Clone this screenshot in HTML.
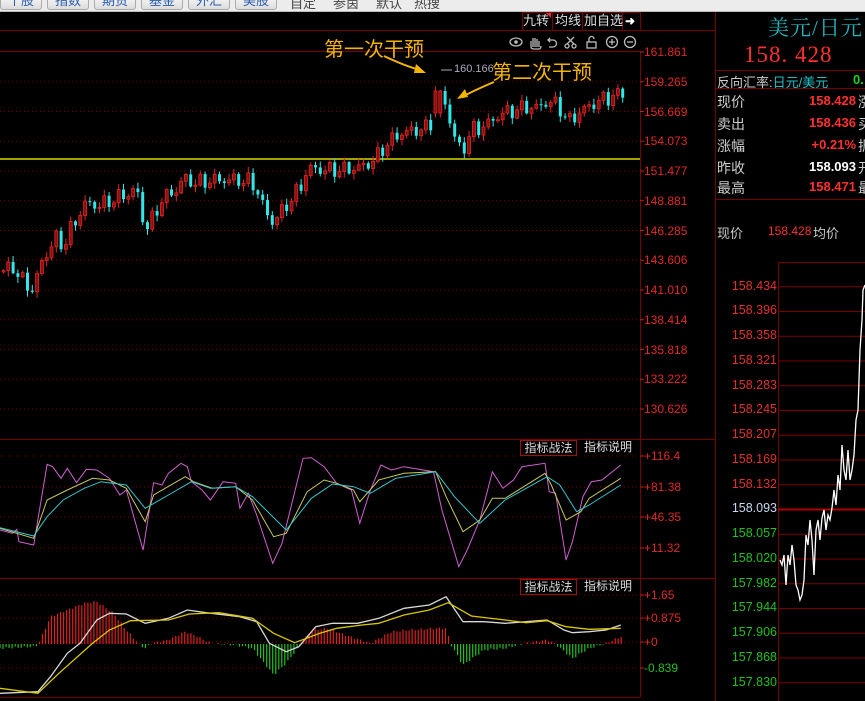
<!DOCTYPE html>
<html><head><meta charset="utf-8">
<style>
*{margin:0;padding:0;box-sizing:border-box}
body{width:865px;height:701px;overflow:hidden;background:#000;position:relative;font-family:"Liberation Sans","Noto Sans CJK SC",sans-serif}
#top{position:absolute;left:0;top:0;width:865px;height:12px;background:#ececec;overflow:hidden;border-bottom:1px solid #bbb}
.tb{position:absolute;top:-8px;height:18px;width:42px;border:1px solid #aaa;border-radius:3px;background:linear-gradient(#fff,#dcdcdc);color:#2a5db0;font-size:13px;text-align:center;line-height:16px}
.tt{position:absolute;top:-7px;font-size:13px;color:#444}
.a{position:absolute;white-space:nowrap}
svg{position:absolute;left:0;top:0}
</style></head><body>
<div id="top">
<div class="tb" style="left:0">个股</div><div class="tb" style="left:47px">指数</div><div class="tb" style="left:94px">期货</div><div class="tb" style="left:141px">基金</div><div class="tb" style="left:188px">外汇</div><div class="tb" style="left:235px">美股</div>
<div class="tt" style="left:290px">自定</div><div class="tt" style="left:333px">参茵</div><div class="tt" style="left:376px">默认</div><div class="tt" style="left:414px">热搜</div>
</div>
<svg id="s" width="865" height="701" viewBox="0 0 865 701"></svg>

<div class="a" style="left:523px;top:13px;font-size:13px;color:#ddd;line-height:16px">九转</div>
<div class="a" style="left:555px;top:13px;font-size:13px;color:#ddd;line-height:16px">均线</div>
<div class="a" style="left:584px;top:13px;font-size:13px;color:#ddd;line-height:16px">加自选</div>
<div class="a" style="left:625px;top:13px;font-size:12px;color:#fff;line-height:16px;font-weight:bold">➜</div>

<div class="a" style="left:324px;top:33px;font-size:20px;color:#f5b400">第一次干预</div>
<div class="a" style="left:492px;top:56px;font-size:20px;color:#f5b400">第二次干预</div>
<div class="a" style="left:454px;top:63px;font-size:11px;color:#aab">160.166</div>

<div id="ax" style="position:absolute;left:644px;top:0;font-size:12px;color:#e02828"></div>

<div class="a" style="left:520px;top:440px;width:57px;height:16px;border:1px solid #a01010;color:#ddd;font-size:12px;line-height:14px;text-align:center">指标战法</div>
<div class="a" style="left:580px;top:440px;width:56px;height:16px;color:#ddd;font-size:12px;line-height:14px;text-align:center">指标说明</div>
<div class="a" style="left:520px;top:579px;width:57px;height:16px;border:1px solid #a01010;color:#ddd;font-size:12px;line-height:14px;text-align:center">指标战法</div>
<div class="a" style="left:580px;top:579px;width:56px;height:16px;color:#ddd;font-size:12px;line-height:14px;text-align:center">指标说明</div>

<div class="a" style="left:768px;top:12px;font-size:21px;color:#20b8c0;font-family:'Liberation Serif','Noto Serif CJK SC',serif;letter-spacing:1px">美元/日元</div>
<div class="a" style="left:744px;top:42px;font-size:23px;color:#ff3030;font-family:'Liberation Serif',serif;letter-spacing:1px">158.&nbsp;428</div>
<div class="a" style="left:717px;top:72px;font-size:13px;color:#ccc">反向汇率:<span style="color:#20c0c8">日元/美元</span></div>
<div class="a" style="left:853px;top:72px;font-size:13px;color:#20d020;font-weight:bold">0.</div>
<div id="rows"></div>
<div class="a" style="left:717px;top:223px;font-size:13px;color:#ccc">现价</div>
<div class="a" style="left:768px;top:224px;font-size:12px;color:#ff3030">158.428</div>
<div class="a" style="left:813px;top:223px;font-size:13px;color:#ccc">均价</div>
<div id="ax2"></div>

<script>
const S=document.getElementById('s');let h='';
const R='#7a0000';
h+=`<line x1="0" y1="30.5" x2="715" y2="30.5" stroke="${R}"/>`;
h+=`<line x1="0" y1="51.5" x2="640" y2="51.5" stroke="${R}"/>`;
h+=`<line x1="640.5" y1="51" x2="640.5" y2="697" stroke="${R}"/>`;
h+=`<line x1="715.5" y1="12" x2="715.5" y2="701" stroke="${R}"/>`;
h+=`<line x1="0" y1="439.5" x2="715" y2="439.5" stroke="${R}"/>`;
h+=`<line x1="0" y1="578.5" x2="715" y2="578.5" stroke="${R}"/>`;
h+=`<line x1="0" y1="697.5" x2="640" y2="697.5" stroke="${R}"/>`;
[[522,552],[552,582],[582,622],[622,640]].forEach(b=>h+=`<rect x="${b[0]+.5}" y="12.5" width="${b[1]-b[0]}" height="18" fill="none" stroke="${R}"/>`);
h+=`<path d="M546 13h5v5z" fill="#e03030"/>`;
const ic='stroke="#bbb" fill="none" stroke-width="1.3"';
h+=`<ellipse cx="516" cy="42" rx="6" ry="4" ${ic}/><circle cx="516" cy="42" r="1.8" fill="#bbb"/>`;
h+=`<path d="M531 47v-6m2 6v-9m2 9v-9m2 9v-8m2 8v-6m-8 6q0 2 3 2h5q2 0 2-3" ${ic}/>`;
h+=`<path d="M550 38l-2 2 2 2m-2-2h5a3 3 0 010 7h-4" ${ic}/>`;
h+=`<path d="M567 37l7 7m0-7l-7 7" ${ic}/><circle cx="567" cy="46" r="2" ${ic}/><circle cx="574" cy="46" r="2" ${ic}/>`;
h+=`<rect x="587" y="42" width="9" height="6" ${ic}/><path d="M589 42v-3a2.5 2.5 0 015 0" ${ic}/>`;
h+=`<circle cx="612" cy="42" r="5.5" ${ic}/><path d="M609 42h6m-3-3v6" ${ic}/>`;
h+=`<circle cx="630" cy="42" r="5.5" ${ic}/><path d="M627 42h6" ${ic}/>`;
const prices=['161.861','159.265','156.669','154.073','151.477','148.881','146.285','143.606','141.010','138.414','135.818','133.222','130.626'];
let ax='';
prices.forEach((p,i)=>{const y=52+i*29.75;if(i>0)h+=`<line x1="0" y1="${y}" x2="640" y2="${y}" stroke="${R}" stroke-dasharray="1,3"/>`;
h+=`<line x1="640" y1="${y}" x2="644" y2="${y}" stroke="#c02020"/>`;
ax+=`<div class="a" style="left:0;top:${y-7}px">${p}</div>`;});
[[456,'+116.4'],[487,'+81.38'],[517,'+46.35'],[548,'+11.32'],[595,'+1.65'],[618,'+0.875'],[642,'+0'],[668,'-0.839']].forEach(([y,t])=>{
 h+=`<line x1="0" y1="${y}" x2="640" y2="${y}" stroke="${R}" stroke-dasharray="1,3"/><line x1="640" y1="${y}" x2="644" y2="${y}" stroke="#c02020"/>`;
 ax+=`<div class="a" style="left:0;top:${y-7}px;${t[0]=='-'?'color:#20c020':''}">${t}</div>`;});
document.getElementById('ax').innerHTML=ax;
h+=`<line x1="0" y1="159" x2="640" y2="159" stroke="#d8d800" stroke-width="1.5"/>`;
const K=[[0,270],[8,268],[15,270],[22,283],[30,290],[35,280],[40,262],[45,255],[50,245],[55,238],[60,245],[65,240],[70,228],[75,220],[80,210],[85,202],[90,205],[100,205],[105,203],[115,198],[125,195],[135,188],[140,215],[145,228],[152,218],[160,200],[167,195],[175,190],[182,178],[190,182],[200,183],[210,180],[220,180],[235,180],[250,182],[258,195],[263,210],[270,222],[278,215],[285,205],[292,197],[300,185],[305,172],[310,168],[320,170],[340,170],[355,168],[365,165],[375,158],[380,150],[390,140],[400,133],[415,130],[425,128],[432,120],[436,92],[441,112],[445,97],[450,132],[455,141],[460,152],[465,143],[470,130],[478,128],[485,125],[495,117],[505,112],[515,110],[525,107],[535,108],[545,102],[555,104],[560,110],[566,122],[572,118],[578,112],[585,108],[595,102],[605,98],[615,95],[622,93]];
function interp(P,x){for(let i=1;i<P.length;i++)if(x<=P[i][0]){const a=P[i-1],b=P[i];return a[1]+(b[1]-a[1])*(x-a[0])/(b[0]-a[0]);}return P[P.length-1][1];}
let prev=272;
for(let x=2;x<=623;x+=4.8){let c=interp(K,x)+Math.sin(x*1.7)*6+Math.sin(x*0.53)*3;let o=prev;
 if(x>434&&x<439){o=113;c=91}
 let up=c<o;let top=Math.min(o,c)-(1+Math.abs(Math.sin(x*3.1))*5),bot=Math.max(o,c)+(1+Math.abs(Math.cos(x*2.3))*5);
 if(x>439&&x<443){top=70;bot=135}
 let col=up?'#e02525':'#30e8e8';
 let bh=Math.max(1,Math.abs(c-o));
 h+=`<line x1="${x+1.5}" y1="${top}" x2="${x+1.5}" y2="${bot}" stroke="${col}"/>`;
 h+=`<rect x="${x}" y="${Math.min(o,c)}" width="3" height="${bh}" fill="${up?'#8a1010':col}" stroke="${col}" stroke-width="${up?0.8:0}"/>`;
 prev=c;}
h+=`<line x1="441" y1="70" x2="452" y2="70" stroke="#aab"/>`;
h+=`<path d="M384 56 Q405 66 420 70" stroke="#f5b400" stroke-width="2" fill="none"/><path d="M426 73l-10-9 -2 9z" fill="#f5b400"/>`;
h+=`<path d="M494 82 Q475 90 464 96" stroke="#f5b400" stroke-width="2" fill="none"/><path d="M457 99l8-10 3 8z" fill="#f5b400"/>`;
function pl(pts,col,w){return `<polyline points="${pts.map(p=>(p[0]/2.376).toFixed(1)+','+(p[1]/3+430).toFixed(1)).join(' ')}" fill="none" stroke="${col}" stroke-width="${w||1}"/>`;}
const J=[[0,300],[30,310],[40,298],[45,335],[80,345],[112,103],[125,110],[145,145],[160,115],[182,158],[205,118],[230,120],[260,145],[285,195],[300,180],[340,360],[365,158],[385,165],[400,130],[430,100],[445,110],[455,155],[480,180],[500,210],[530,155],[560,160],[570,235],[590,190],[610,255],[648,400],[670,340],[720,85],[740,83],[770,110],[800,160],[835,180],[855,280],[880,180],[905,105],[930,120],[960,110],[1030,125],[1050,240],[1090,410],[1110,360],[1140,270],[1170,125],[1195,175],[1220,150],[1240,110],[1295,100],[1305,185],[1320,190],[1345,390],[1360,335],[1385,200],[1405,155],[1430,150],[1475,105]];
const KK=[[0,295],[80,325],[112,210],[160,180],[220,145],[260,150],[300,175],[345,275],[365,195],[440,140],[460,155],[505,175],[560,170],[600,210],[650,320],[680,310],[730,185],[770,150],[800,160],[840,180],[855,215],[900,150],[960,130],[1035,125],[1060,200],[1100,305],[1140,270],[1170,205],[1200,205],[1295,130],[1310,165],[1345,270],[1380,245],[1400,205],[1475,145]];
const D=[[0,293],[80,318],[112,260],[150,210],[200,175],[240,155],[300,165],[345,235],[400,195],[455,155],[500,175],[560,170],[600,200],[680,300],[740,205],[790,162],[840,170],[880,190],[940,145],[1035,125],[1080,200],[1140,280],[1200,210],[1300,140],[1330,165],[1370,245],[1400,225],[1475,165]];
h+=pl(J,'#d060d0')+pl(KK,'#c8c860')+pl(D,'#30c8d0');
const HB=[[0,655],[80,650],[90,645],[120,560],[200,520],[230,515],[270,550],[300,600],[330,642],[345,655],[360,640],[400,630],[440,605],[470,620],[500,640],[560,645],[600,655],[650,735],[680,700],[710,650],[740,600],[780,595],[820,615],[880,640],[930,605],[970,600],[1030,595],[1060,595],[1070,640],[1100,705],[1150,660],[1200,655],[1240,642],[1300,630],[1320,642],[1360,685],[1400,655],[1440,640],[1475,620]];
for(let zx=0;zx<=1478;zx+=7.2){let y=interp(HB,zx)+Math.sin(zx*0.3)*3;let x=(zx/2.376).toFixed(1);let y0=644,yy=y/3+430;
 h+=`<line x1="${x}" y1="${y0}" x2="${x}" y2="${yy}" stroke="${yy<y0?'#e02020':'#20c020'}" stroke-width="1.2"/>`;}
const DIF=[[0,790],[90,785],[120,740],[160,670],[190,640],[230,570],[260,550],[300,552],[345,580],[400,565],[445,540],[490,548],[570,560],[610,575],[640,640],[680,665],[710,650],[750,590],[790,580],[850,580],[900,565],[960,535],[1020,525],[1060,500],[1100,575],[1150,575],[1200,580],[1250,575],[1300,570],[1340,600],[1360,608],[1400,605],[1440,600],[1475,585]];
const DEA=[[0,775],[90,790],[140,730],[220,640],[260,600],[310,572],[400,570],[450,552],[520,548],[600,565],[650,610],[700,638],[760,610],[800,595],[860,585],[900,580],[960,555],[1020,540],[1065,518],[1120,558],[1200,570],[1250,578],[1300,572],[1345,590],[1400,598],[1475,595]];
h+=pl(DIF,'#d8d8d8',1.3)+pl(DEA,'#d8c800',1.3);
h+=`<line x1="716" y1="70.5" x2="865" y2="70.5" stroke="${R}"/><line x1="716" y1="88.5" x2="865" y2="88.5" stroke="${R}"/><line x1="716" y1="199.5" x2="865" y2="199.5" stroke="${R}"/>`;
h+=`<line x1="778.5" y1="262" x2="778.5" y2="701" stroke="${R}"/><line x1="778" y1="262.5" x2="865" y2="262.5" stroke="${R}"/>`;
const mp=['158.434','158.396','158.358','158.321','158.283','158.245','158.207','158.169','158.132','158.093','158.057','158.020','157.982','157.944','157.906','157.868','157.830'];
let a2='';
mp.forEach((p,i)=>{const y=286.7+i*24.75;h+=`<line x1="778" y1="${y}" x2="865" y2="${y}" stroke="${i==9?'#b00000':R}" stroke-width="${i==9?2:1}"/>`;
 a2+=`<div class="a" style="right:${865-777}px;top:${y-8}px;font-size:12.5px;color:${i<9?'#e03030':i==9?'#c8d8f0':'#20c020'}">${p}</div>`;});
document.getElementById('ax2').innerHTML=a2;
const W=[[780,560],[782,565],[784,555],[786,585],[788,555],[790,565],[792,545],[794,560],[796,585],[798,590],[800,600],[802,595],[804,580],[806,535],[808,545],[810,520],[812,540],[814,575],[816,530],[818,520],[820,540],[822,518],[824,510],[826,530],[828,515],[830,520],[832,508],[834,490],[836,505],[838,475],[840,490],[842,445],[844,470],[846,480],[848,450],[850,480],[852,470],[854,455],[856,420],[858,410],[860,350],[862,320],[863,290],[865,285]];
let d='M'+W.map(p=>p.join(',')).join(' L');
h+=`<path d="${d}" stroke="#fff" fill="none" stroke-width="1.3"/>`;
S.innerHTML=h;
const rows=[['现价','158.428','#ff3030',101,'涨'],['卖出','158.436','#ff3030',123,'买'],['涨幅','+0.21%','#ff3030',145,'振'],['昨收','158.093','#fff',167,'开'],['最高','158.471','#ff3030',187,'最']];
let r='';rows.forEach(([l,v,c,y,t])=>{r+=`<div class="a" style="left:717px;top:${y-9}px;font-size:14px;color:#ccc">${l}</div><div class="a" style="right:9px;top:${y-8}px;font-size:13px;font-weight:bold;color:${c}">${v}</div><div class="a" style="left:858px;top:${y-9}px;font-size:14px;color:#ccc">${t}</div>`;});
document.getElementById('rows').innerHTML=r;
</script>
</body></html>
